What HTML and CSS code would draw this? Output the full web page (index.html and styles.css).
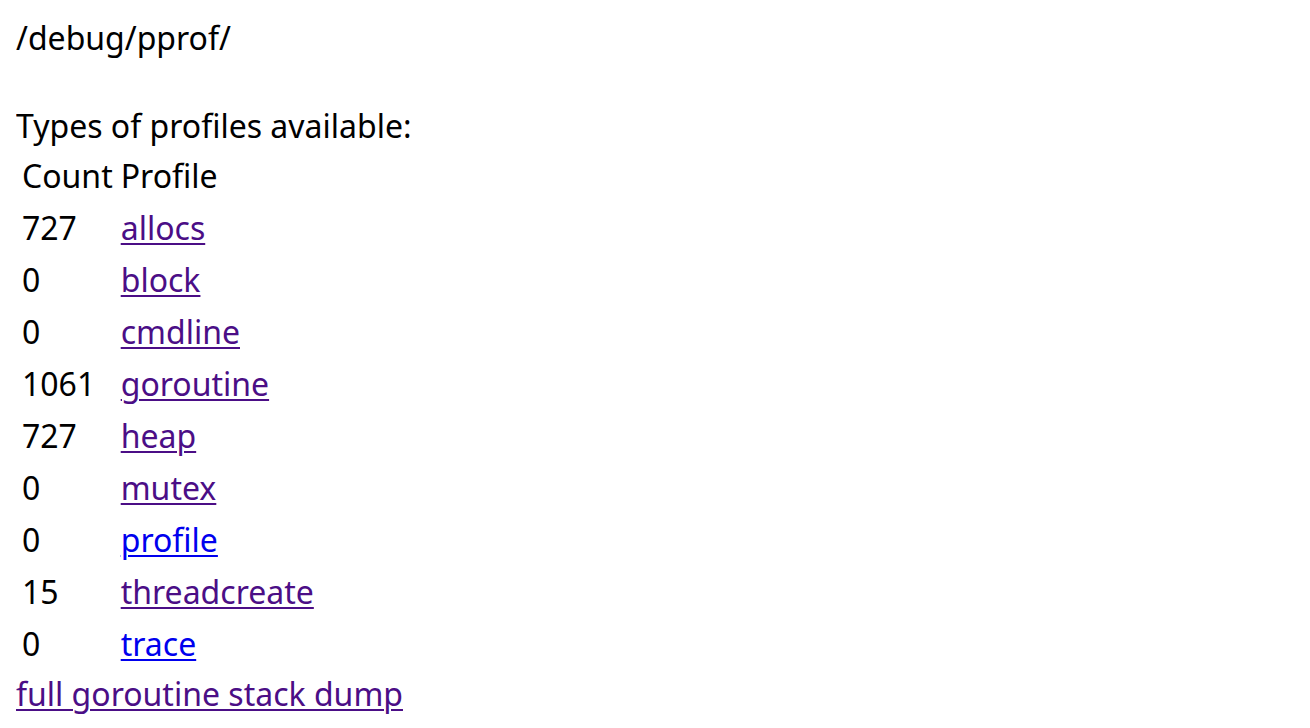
FILE: index.html
```html
<!DOCTYPE html>
<html>
<head>
<meta charset="utf-8">
<title>/debug/pprof/</title>
<link rel="stylesheet" href="styles.css">
</head>
<body>
/debug/pprof/<br>
<br>
Types of profiles available:
<table class="profiles">
<thead><tr><td>Count</td><td>Profile</td></tr></thead>
<tbody>
<tr><td>727</td><td><a class="visited" href="allocs?debug=1">allocs</a></td></tr>
<tr><td>0</td><td><a class="visited" href="block?debug=1">block</a></td></tr>
<tr><td>0</td><td><a class="visited" href="cmdline?debug=1">cmdline</a></td></tr>
<tr><td>1061</td><td><a class="visited" href="goroutine?debug=1">goroutine</a></td></tr>
<tr><td>727</td><td><a class="visited" href="heap?debug=1">heap</a></td></tr>
<tr><td>0</td><td><a class="visited" href="mutex?debug=1">mutex</a></td></tr>
<tr><td>0</td><td><a class="fresh" href="profile?debug=1">profile</a></td></tr>
<tr><td>15</td><td><a class="visited" href="threadcreate?debug=1">threadcreate</a></td></tr>
<tr><td>0</td><td><a class="fresh" href="trace?debug=1">trace</a></td></tr>
</tbody>
</table>
<a class="visited" href="goroutine?debug=2">full goroutine stack dump</a>
</body>
</html>
```
FILE: styles.css
```css
html {
  background: #ffffff;
}
body {
  margin: 16px;
  font-family: "Noto Sans", "Liberation Sans", sans-serif;
  font-size: 32px;
  line-height: 44px;
  color: #000000;
}
.profiles {
  border-spacing: 4px;
  font-size: 32px;
}
.profiles td {
  padding: 2px;
  line-height: 44px;
}
a {
  text-decoration: underline;
  text-decoration-thickness: 2px;
  text-underline-offset: 3px;
}
a.visited {
  color: #4b0e86;
}
a.fresh {
  color: #0000ee;
}
```
